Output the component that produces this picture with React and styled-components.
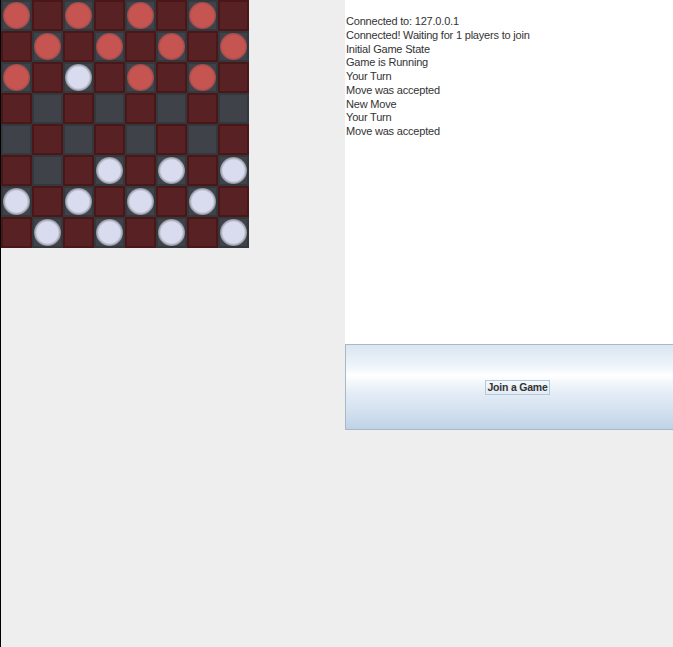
import React from "react";
import styled, { createGlobalStyle } from "styled-components";

const Global = createGlobalStyle`
  html, body { margin: 0; padding: 0; background: #eeeeee; }
  body { width: 673px; height: 647px; overflow: hidden; font-family: "Liberation Sans", Arial, sans-serif; }
`;

const Frame = styled.div`
  width: 673px;
  height: 647px;
  display: flex;
  background: #eeeeee;
  border-left: 1px solid #000;
  box-sizing: border-box;
`;

const BoardColumn = styled.div`
  width: 344px;
  flex: none;
`;

const Board = styled.div`
  display: grid;
  grid-template-columns: repeat(8, 31px);
  grid-template-rows: repeat(8, 31px);
  width: 248px;
`;

const Cell = styled.div`
  box-sizing: border-box;
  border: 2px solid ${(p) => (p.$dark ? "#34373c" : "#4a1719")};
  background: ${(p) => (p.$dark ? "#3f4248" : "#582224")};
  display: flex;
  align-items: center;
  justify-content: center;
`;

const Piece = styled.div`
  width: 27px;
  height: 27px;
  border-radius: 50%;
  background: ${(p) =>
    p.$color === "red"
      ? "radial-gradient(circle, #c65552 0, #c65552 11px, #9a4a4c 13.5px)"
      : "radial-gradient(circle, #d9dcee 0, #d9dcee 10.5px, #8b8d97 13.5px)"};
`;

const RightColumn = styled.div`
  flex: 1;
  display: flex;
  flex-direction: column;
`;

const Log = styled.div`
  height: 344px;
  background: #ffffff;
  box-sizing: border-box;
  padding: 15px 0 0 1px;
  font-size: 11px;
  letter-spacing: -0.2px;
  line-height: 13.75px;
  color: #333333;
`;

const LogLine = styled.div`
  white-space: nowrap;
`;

const JoinButton = styled.div`
  height: 86px;
  box-sizing: border-box;
  border: 1px solid #a8b8c8;
  border-right: none;
  background: linear-gradient(
    to bottom,
    #dae6f2 0%,
    #eef4fa 25%,
    #ffffff 36%,
    #e6eef7 55%,
    #d2e0ee 80%,
    #bed3e7 100%
  );
  display: flex;
  align-items: center;
  justify-content: center;
`;

const ButtonLabel = styled.span`
  font-weight: bold;
  font-size: 10.5px;
  letter-spacing: -0.2px;
  color: #333333;
  border: 1px solid #b4c8dc;
  padding: 0 1px;
  line-height: 13px;
  margin-left: 16px;
`;

const layout = [
  "r.r.r.r.",
  ".r.r.r.r",
  "r.w.r.r.",
  "........",
  "........",
  "...w.w.w",
  "w.w.w.w.",
  ".w.w.w.w",
];

const messages = [
  "Connected to: 127.0.0.1",
  "Connected! Waiting for 1 players to join",
  "Initial Game State",
  "Game is Running",
  "Your Turn",
  "Move was accepted",
  "New Move",
  "Your Turn",
  "Move was accepted",
];

export default function App() {
  return (
    <>
      <Global />
      <Frame>
        <BoardColumn>
          <Board>
            {layout.map((row, r) =>
              row.split("").map((ch, c) => (
                <Cell key={`${r}-${c}`} $dark={(r + c) % 2 === 0}>
                  {ch === "r" && <Piece $color="red" />}
                  {ch === "w" && <Piece $color="white" />}
                </Cell>
              ))
            )}
          </Board>
        </BoardColumn>
        <RightColumn>
          <Log>
            {messages.map((m, i) => (
              <LogLine key={i}>{m}</LogLine>
            ))}
          </Log>
          <JoinButton>
            <ButtonLabel>Join a Game</ButtonLabel>
          </JoinButton>
        </RightColumn>
      </Frame>
    </>
  );
}
